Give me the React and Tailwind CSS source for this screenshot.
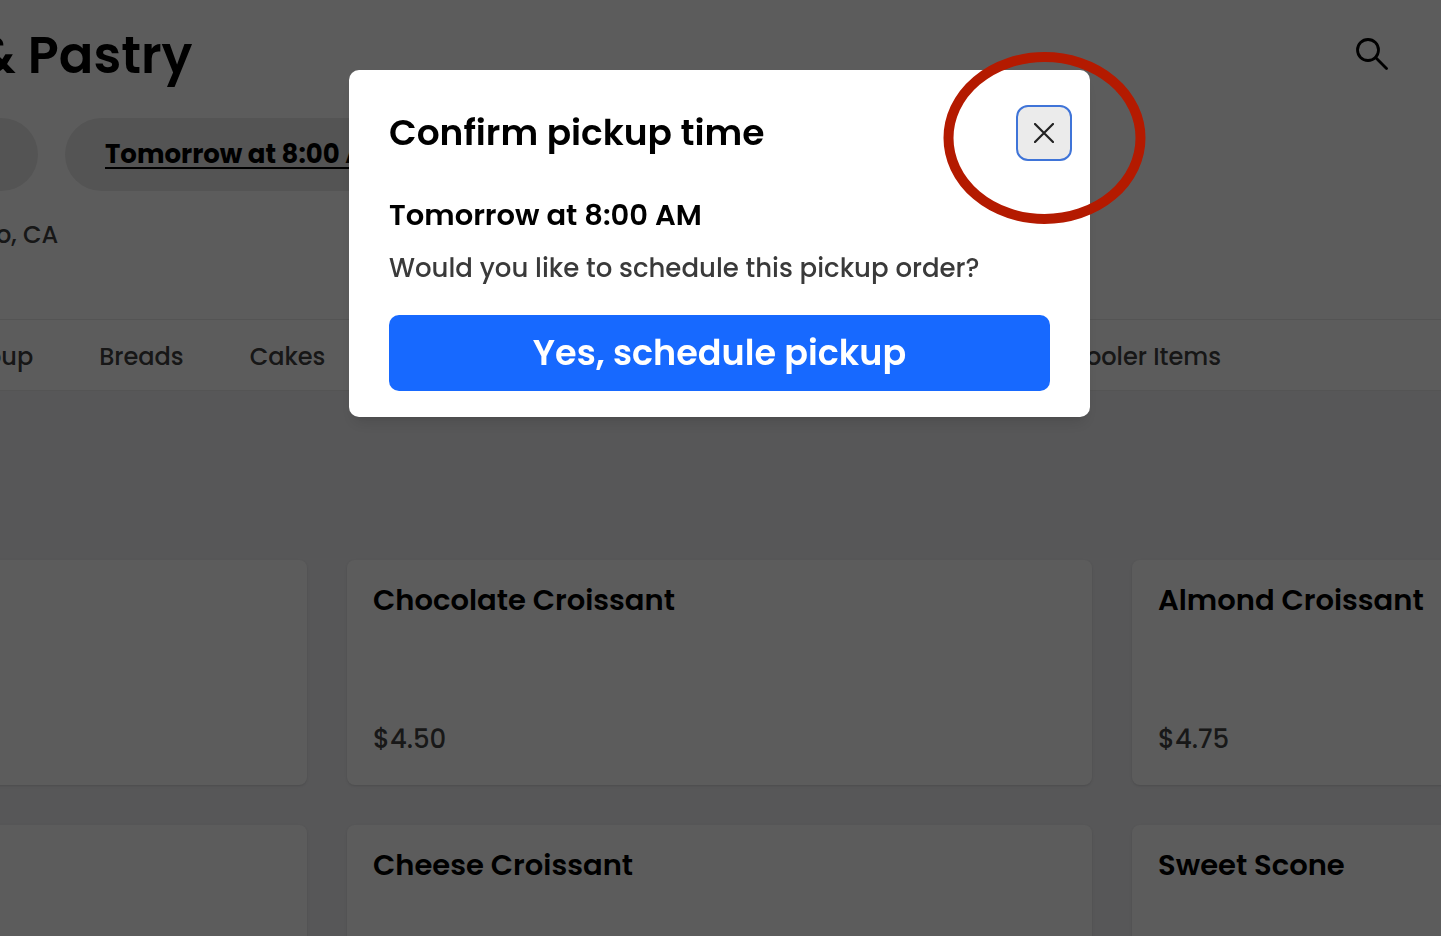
import React, { useState } from 'react';

const products = [
  { id: 1, name: '', price: '' },
  { id: 2, name: 'Chocolate Croissant', price: '$4.50' },
  { id: 3, name: 'Almond Croissant', price: '$4.75' },
  { id: 4, name: '', price: '' },
  { id: 5, name: 'Cheese Croissant', price: '' },
  { id: 6, name: 'Sweet Scone', price: '' }
];

function SearchIcon() {
  return (
    <svg className="w-8 h-8" viewBox="0 0 32 32" fill="none" stroke="currentColor" strokeWidth="2.8" strokeLinecap="round">
      <circle cx="12" cy="12" r="10.5" />
      <path d="M19.6 19.6 30.5 30.5" />
    </svg>
  );
}

function CloseIcon() {
  return (
    <svg className="w-5 h-5" viewBox="0 0 20 20" fill="none" stroke="currentColor" strokeWidth="2.2" strokeLinecap="round">
      <path d="M1 1 19 19M19 1 1 19" />
    </svg>
  );
}

function StoreHeader() {
  return (
    <header className="flex items-start justify-between bg-white pt-6 pb-16 pr-[53px]">
      <div>
        <h1 className="-ml-6 text-[51px] leading-[62px] font-semibold text-black whitespace-nowrap">&amp; Pastry</h1>
        <div className="mt-8 flex gap-[27px]">
          <button type="button" aria-label="Pickup" className="h-[73px] w-[38px] rounded-r-full bg-[#e8e8e8]" />
          <button
            type="button"
            className="h-[73px] rounded-full bg-[#e8e8e8] px-10 text-[26px] font-bold text-black underline decoration-2 underline-offset-4 whitespace-nowrap"
          >
            Tomorrow at 8:00 AM
          </button>
        </div>
        <p className="-ml-1 mt-6 text-[24px] leading-[40px] font-medium text-[#404040]">o, CA</p>
      </div>
      <button type="button" aria-label="Search" className="mt-3.5 text-black">
        <SearchIcon />
      </button>
    </header>
  );
}

function CategoryNav() {
  return (
    <nav className="flex h-[72px] items-center justify-between border-y border-[#e8e8e8] bg-white pt-1 pr-[220px] text-[24px] font-medium text-[#404040]">
      <div className="-ml-3.5 flex gap-[66px]">
        <a href="#soup">oup</a>
        <a href="#breads">Breads</a>
        <a href="#cakes">Cakes</a>
      </div>
      <a href="#cooler">Cooler Items</a>
    </nav>
  );
}

function ProductCard({ product }) {
  return (
    <article className="flex h-[225px] flex-col justify-between rounded-lg bg-white px-[26px] pt-5 pb-[26px] shadow-sm whitespace-nowrap">
      <h3 className="text-[29px] leading-[40px] font-semibold text-black">{product.name}</h3>
      <p className="text-[26px] leading-[40px] font-medium text-[#444444]">{product.price}</p>
    </article>
  );
}

function PickupDialog({ onClose }) {
  return (
    <div className="fixed inset-0 flex items-start justify-center bg-black/64 pt-[70px] pr-0.5">
      <div
        role="dialog"
        aria-modal="true"
        aria-labelledby="pickup-title"
        className="relative w-full max-w-[741px] rounded-[10px] bg-white pt-[35px] pb-[26px] shadow-lg"
      >
        <div className="flex items-center justify-between pl-10 pr-[18px]">
          <h2 id="pickup-title" className="text-[36px] leading-[48px] font-semibold text-black">Confirm pickup time</h2>
          <button
            type="button"
            aria-label="Close"
            onClick={onClose}
            className="flex h-14 w-14 items-center justify-center rounded-xl border-2 border-[#3f74d8] bg-[#ebebeb] text-[#222222]"
          >
            <CloseIcon />
          </button>
        </div>
        <div className="mt-[34px] px-10">
          <p className="text-[29px] leading-[40px] font-semibold text-black">Tomorrow at 8:00 AM</p>
          <p className="mt-[13px] text-[26px] leading-[40px] font-medium text-[#3a3a3a]">Would you like to schedule this pickup order?</p>
          <button
            type="button"
            onClick={onClose}
            className="mt-[27px] h-[76px] w-full rounded-[10px] bg-[#1769ff] text-[35px] font-semibold text-white"
          >
            Yes, schedule pickup
          </button>
        </div>
        {/* hand-drawn ring around the close button */}
        <svg
          className="pointer-events-none absolute -top-5 -right-14 h-[174px] w-[203px]"
          viewBox="0 0 203 174"
          fill="none"
          stroke="#b41a00"
          strokeWidth="10"
        >
          <ellipse cx="101.5" cy="88" rx="96" ry="81" />
        </svg>
      </div>
    </div>
  );
}

function App() {
  const [open, setOpen] = useState(true);

  return (
    <div className="h-screen overflow-hidden bg-[#f0f0f3] font-['Poppins','Inter',sans-serif]">
      <StoreHeader />
      <CategoryNav />
      <main className="-mx-3 grid grid-cols-[319fr_745fr_321fr] gap-10 pt-[169px]">
        {products.map((product) => (
          <ProductCard key={product.id} product={product} />
        ))}
      </main>
      {open && <PickupDialog onClose={() => setOpen(false)} />}
    </div>
  );
}

export default App;
